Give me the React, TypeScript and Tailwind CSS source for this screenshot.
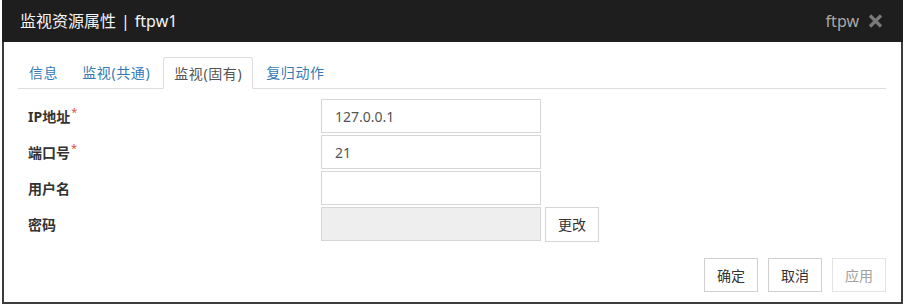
const FONT = '"Noto Sans", "Noto Sans CJK SC", sans-serif';

const TABS = ['信息', '监视(共通)', '监视(固有)', '复归动作'];
const ACTIVE_TAB = 2;

interface FieldProps {
  label: string;
  required?: boolean;
  value?: string;
  disabled?: boolean;
  action?: string;
}

const FIELDS: FieldProps[] = [
  { label: 'IP地址', required: true, value: '127.0.0.1' },
  { label: '端口号', required: true, value: '21' },
  { label: '用户名', value: '' },
  { label: '密码', disabled: true, action: '更改' },
];

const CloseIcon = () => (
  <svg width="17" height="14" viewBox="0 0 17 14" aria-hidden>
    <path d="M3 1.5 L14 12.5 M14 1.5 L3 12.5" stroke="#7a7a7a" strokeWidth="3.2" />
  </svg>
);

const Tabs = () => (
  <ul className="flex h-[32px] border-b border-[#dddddd]">
    {TABS.map((tab, i) =>
      i === ACTIVE_TAB ? (
        <li
          key={tab}
          className="mr-[2px] -mb-px flex h-[32px] items-center rounded-t-[3px] border border-[#dddddd] border-b-white bg-white px-[10px] text-[14px] tracking-[0.6px] text-[#555555]"
        >
          {tab}
        </li>
      ) : (
        <li
          key={tab}
          className="mr-[2px] flex h-[31px] items-center px-[11px] text-[14px] tracking-[0.6px] text-[#337ab7]"
        >
          {tab}
        </li>
      ),
    )}
  </ul>
);

const Field = ({ label, required, value, disabled, action }: FieldProps) => (
  <div className="flex h-[34px] items-center">
    <div className="w-[303px] pl-[10px] text-[14px] font-bold text-[#333333]">
      {label}
      {required && <sup className="ml-px text-[11px] font-normal text-[#d9534f]">*</sup>}
    </div>
    <div
      className={`flex h-[34px] w-[220px] items-center border border-[#d6d6d6] px-[13px] text-[14px] text-[#555555] ${
        disabled ? 'bg-[#eeeeee]' : 'bg-white'
      }`}
    >
      {value}
    </div>
    {action && (
      <button className="ml-[4px] h-[35px] w-[54px] border border-[#d6d6d6] bg-white text-[14px] text-[#333333]">
        {action}
      </button>
    )}
  </div>
);

const FooterButton = ({ label, disabled }: { label: string; disabled?: boolean }) => (
  <button
    className={`h-[34px] w-[54px] border bg-white text-[14px] ${
      disabled ? 'border-[#e4e4e4] text-[#a0a0a0]' : 'border-[#d0d0d0] text-[#333333]'
    }`}
  >
    {label}
  </button>
);

export default function App() {
  return (
    <div className="h-[306px] w-[904px] bg-white" style={{ fontFamily: FONT }}>
      <div className="ml-[2px] flex h-[304px] w-[901px] flex-col border-2 border-t-0 border-[#3c3c3c]">
        <div className="-mx-[2px] flex h-[42px] items-center justify-between bg-[#1e1e1e] pl-[18px] pr-[19px]">
          <span className="flex items-center text-[16px] text-[#f4f4f4]">
            监视资源属性
            <span className="mx-[5px]">|</span>
            ftpw1
          </span>
          <div className="flex items-center gap-[8px]">
            <span className="text-[16px] text-[#a8a8a8]">ftpw</span>
            <CloseIcon />
          </div>
        </div>
        <div className="flex flex-1 flex-col pl-[14px] pr-[15px] pt-[15px]">
          <Tabs />
          <div className="mt-[10px] flex flex-col gap-[2px]">
            {FIELDS.map((f) => (
              <Field key={f.label} {...f} />
            ))}
          </div>
          <div className="mt-[17px] flex justify-end gap-[10px]">
            <FooterButton label="确定" />
            <FooterButton label="取消" />
            <FooterButton label="应用" disabled />
          </div>
        </div>
      </div>
    </div>
  );
}
